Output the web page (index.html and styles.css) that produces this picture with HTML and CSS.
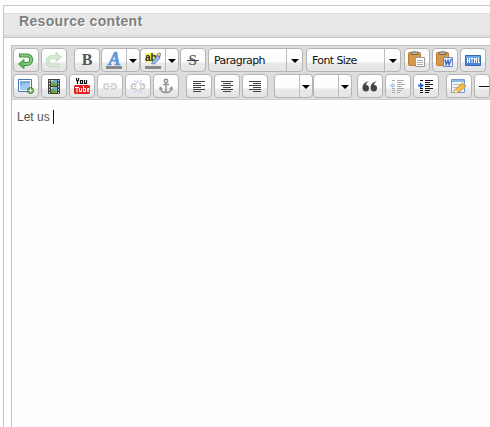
FILE: index.html
```html
<!DOCTYPE html>
<html lang="en">
<head>
<meta charset="utf-8">
<title>Resource content</title>
<link rel="stylesheet" href="styles.css">
</head>
<body>
<section class="panel">
  <h2 class="title">Resource content</h2>
  <div class="editor">
    <div class="toolbar">
      <div class="row">
        <button class="btn"><svg viewBox="0 0 24 22"><path d="M5 6.500h8a4 4 0 0 1 0 8.500h-3" fill="none" stroke="#3f9440" stroke-width="4"/><path d="M4.500 15l5.500-4.500v9z" fill="#66b963" stroke="#3f9440"/><path d="M6 6.500h7a4 4 0 0 1 0 8.500h-4" fill="none" stroke="#83c980" stroke-width="2"/></svg></button>
        <button class="btn"><svg viewBox="0 0 24 22"><path d="M18 16.500h-8a4 4 0 0 1 0-8.500h4" fill="none" stroke="#c3dec3" stroke-width="4"/><path d="M19.500 8l-5.500-4.500v9z" fill="#d1e6d1" stroke="#c3dec3"/><path d="M17 16.500h-7a4 4 0 0 1 0-8.500h5" fill="none" stroke="#d8ead8" stroke-width="2"/></svg></button>
        <button class="btn gap7"><span class="bold">B</span></button>
        <button class="btn split"><svg viewBox="0 0 24 22"><text x="6.500" y="15.500" class="letter-a">A</text><path d="M4 17h16v3H4z" fill="#888"/></svg><i class="arrow"></i></button>
        <button class="btn split"><svg viewBox="0 0 24 22"><path d="M4 4h11v9H4z" fill="#fff45b"/><text x="4" y="12" class="letter-ab">ab</text><path d="M10.500 14.500l2-3 4-5 2.500 1-1 3-5 4.500z" fill="#9bbcf0" stroke="#5a75a8" stroke-width=".8"/><path d="M15.500 6.500l2-2.500 2 .5-.5 3z" fill="#f0dca8" stroke="#555" stroke-width=".7"/><path d="M4 17h16v3H4z" fill="#888"/></svg><i class="arrow"></i></button>
        <button class="btn gap1"><svg viewBox="0 0 24 22"><text x="7.500" y="16" class="strike">S</text><path d="M6 11.500h12" stroke="#444"/></svg></button>
        <div class="select"><span class="value">Paragraph</span><i class="arrow"></i></div>
        <div class="select gap3"><span class="value">Font Size</span><i class="arrow"></i></div>
        <button class="btn gap3"><svg viewBox="0 0 24 22"><rect x="3.500" y="3.500" width="12" height="13" rx="1" fill="#d29a4b" stroke="#b97b32"/><path d="M6 4.500V3h1.500q2-1.500 4 0H13v2.500H6z" fill="#aaa" stroke="#76552d" stroke-width=".7"/><path d="M10.500 8.500h9v9h-9z" fill="#fff" stroke="#999"/><path d="M12 11.500h6m-6 2h6m-6 2h6" stroke="#aaa"/></svg></button>
        <button class="btn"><svg viewBox="0 0 24 22"><rect x="3.500" y="3.500" width="12" height="13" rx="1" fill="#d29a4b" stroke="#b97b32"/><path d="M6 4.500V3h1.500q2-1.500 4 0H13v2.500H6z" fill="#aaa" stroke="#76552d" stroke-width=".7"/><path d="M10.500 8.500h9v9h-9z" fill="#e8effd" stroke="#6d87cb"/><path d="M12 10.500l1.200 5 1.800-4 1 4 2.500-5.500" fill="none" stroke="#476cc4" stroke-width="1.500"/></svg></button>
        <button class="btn"><svg viewBox="0 0 24 22"><path d="M4.500 6.500h15v10h-15z" fill="#4b87d5" stroke="#3569b2"/><path d="M5 7h14v3H5z" fill="#6ba5e5"/><path d="M6.500 9v5m2-5v5m-2-2.500h2M9.500 9.500h3M11 9.500V14M13.500 14V9l1 2 1-2v5M17.500 9v4.500h1.500" fill="none" stroke="#fff"/></svg></button>
      </div>
      <div class="row">
        <button class="btn"><svg viewBox="0 0 24 22"><path d="M4.500 4.500h13v12h-13z" fill="#fff" stroke="#4674ab"/><path d="M6 6h10v9H6z" fill="#79aee4"/><path d="M6 11q5-4 10-2v6H6z" fill="#a2c9ef"/><circle cx="16.500" cy="15.500" r="3" fill="#6bac4a" stroke="#48852e"/><path d="M14.500 15.500h4m-2-2v4" stroke="#fff"/></svg></button>
        <button class="btn"><svg viewBox="0 0 24 22"><path d="M6 4h12v15H6z" fill="#414141"/><path d="M7.500 5v14M16.500 5v14" stroke="#ddd" stroke-dasharray="1.500 1.500"/><path d="M9 5h6v6H9zm0 7h6v6H9z" fill="#64b4d8"/><path d="M9 8l3-1 3 3v1H9zm0 7l3-1 3 3v1H9z" fill="#6da832"/><path d="M9 5h3l-3 2zm0 7h3l-3 2z" fill="#f3dc6e"/></svg></button>
        <button class="btn"><svg viewBox="0 0 24 22"><path d="M6.500 3v2l1 1.500L8.500 5V3M7.500 6v3M10.500 5.500h2v3h-2zM14.500 5v3.500h2V5" fill="none" stroke="#111" stroke-width="1.200"/><rect x="4" y="10" width="16" height="9" rx="1.500" fill="#e32121"/><path d="M5 12.500h4M7 12v5.500M9.500 13v3.500h2V13M13.500 11v5.500h2v-3h-2M19 16.500h-1.500v-3H19v1.500h-1.500" fill="none" stroke="#fff"/></svg></button>
        <button class="btn"><svg viewBox="0 0 24 22"><g fill="none" stroke="#cbcbcb" stroke-width="1.500"><path d="M11 9H8.500a2.500 2.500 0 0 0 0 5H11M13 9h2.500a2.500 2.500 0 0 1 0 5H13M9 11.500h6"/></g></svg></button>
        <button class="btn"><svg viewBox="0 0 24 22"><path d="M10.500 9H8a2.500 2.500 0 0 0 0 5h2.500M13.500 9H16a2.500 2.500 0 0 1 0 5h-2.500M8 11.500h2m4 0h2" fill="none" stroke="#c5c5c5" stroke-width="1.500"/><path d="M8 5l3 3m5-3l-3 3M8 18l3-3m5 3l-3-3M12 5v3m0 7v3" stroke="#b7cdf2"/></svg></button>
        <button class="btn"><svg viewBox="0 0 24 22"><g fill="none" stroke="#929292" stroke-width="1.500"><circle cx="12" cy="6" r="1.700"/><path d="M12 8v9M9 9.500h6M6.500 12.500q0 5 5.500 5t5.500-5"/></g><path d="M5 15l1-4 3 3zm14 0l-1-4-3 3z" fill="#929292"/></svg></button>
        <button class="btn gap7"><svg viewBox="0 0 24 22"><path d="M6 6.500h12M6 8.500h8M6 10.500h12M6 12.500h8M6 14.500h12M6 16.500h8" stroke="#444"/></svg></button>
        <button class="btn"><svg viewBox="0 0 24 22"><path d="M6 6.500h12M8 8.500h8M6 10.500h12M8 12.500h8M6 14.500h12M8 16.500h8" stroke="#444"/></svg></button>
        <button class="btn"><svg viewBox="0 0 24 22"><path d="M6 6.500h12M10 8.500h8M6 10.500h12M10 12.500h8M6 14.500h12M10 16.500h8" stroke="#444"/></svg></button>
        <button class="btn split gap6"><span class="blank"></span><i class="arrow"></i></button>
        <button class="btn split"><span class="blank"></span><i class="arrow"></i></button>
        <button class="btn gap7"><svg viewBox="0 0 24 22"><path d="M11 6q-3 1.500-3 4 3 0 3 3 0 3.500-3 3.500-3.500 0-3.500-4 0-5 6.500-6.500zM19 6q-3 1.500-3 4 3 0 3 3 0 3.500-3 3.500-3.500 0-3.500-4Q12.500 7.500 19 6z" fill="#444"/></svg></button>
        <button class="btn"><svg viewBox="0 0 24 22"><path d="M6 5.500h3m2 0h7M11 7.500h5M11 9.500h8M11 11.500h5M6 13.500h3m2 0h7M6 15.500h3m2 0h5M6 17.500h3m2 0h3" stroke="#aaa"/><path d="M9 10.500H6" stroke="#b5cbed" stroke-width="2"/><path d="M3.500 10.500l4-3v6z" fill="#b5cbed"/></svg></button>
        <button class="btn"><svg viewBox="0 0 24 22"><path d="M6 5.500h3m2 0h8M11 7.500h5M11 9.500h8M11 11.500h5M6 13.500h3m2 0h8M6 15.500h3m2 0h5M6 17.500h3m2 0h4" stroke="#111"/><path d="M4 10.500h4" stroke="#3973d0" stroke-width="2"/><path d="M10 10.500l-4-3v6z" fill="#2865c7"/></svg></button>
        <button class="btn gap7"><svg viewBox="0 0 24 22"><path d="M4.500 4.500h13v13h-13z" fill="#eff6ff" stroke="#6e9cd3"/><path d="M5 5h12v2H5z" fill="#8db7e4"/><path d="M6 9.500h10M6 12.500h6M6 15.500h3" stroke="#a5c8a0"/><path d="M7.500 18l1-4 7-6 3.500 3-7 6z" fill="#f5bc4e" stroke="#b77c26" stroke-width=".8"/><path d="M7.500 18l1-3.500 2.500 2.500z" fill="#fff0ca"/></svg></button>
        <button class="btn"><svg viewBox="0 0 24 22"><path d="M4 11.500h16" stroke="#111"/></svg></button>
      </div>
    </div>
    <div class="content"><span>Let us</span><i class="caret"></i></div>
  </div>
</section>
</body>
</html>
```
FILE: styles.css
```css
* { box-sizing: border-box; }
body { margin: 0; height: 427px; overflow: hidden; background: #fdfdfd; font-family: "Liberation Sans", Arial, sans-serif; }
.panel { height: 422px; margin: 5px 0 0 3px; border: 1px solid #c6c6c6; border-width: 1px 0 0 1px; padding-top: 7px; overflow: hidden; background: #fefefe; }
.title { height: 25px; margin: 0; padding: 0 0 0 15px; border-top: 1px dotted #ddd; border-bottom: 1px solid #c6c6c6; background: linear-gradient(#e8e8e8 20px, #dcdcdc 21px); color: #808080; font-size: 14px; line-height: 15px; letter-spacing: .32px; text-shadow: 1px 1px #fff; }
.editor { margin: 7px 0 0 7px; height: 400px; border: 1px solid #c0c0c0; border-right: 0; }
.toolbar { height: 54px; padding: 2px 0 2px 1px; overflow: hidden; background: #ddd; border-bottom: 1px solid #d0d0d0; }
.row { display: flex; height: 24px; margin-bottom: 2px; overflow: hidden; }
.btn, .select { flex: none; display: flex; height: 24px; padding: 0; border: 1px solid #b4b4b4; border-radius: 4px; background: linear-gradient(#fff 0, #fcfcfc 13px, #e9e9e9 14px, #e5e5e5); }
.btn { width: 26px; margin-right: 2px; align-items: center; justify-content: center; }
.btn:last-child { flex: 0 1 26px; min-width: 0; margin-right: 0; justify-content: flex-start; overflow: hidden; }
.btn svg { display: block; flex: none; width: 24px; height: 22px; }
.gap1 { margin-left: 1px; }
.gap3 { margin-left: 3px; }
.gap6 { margin-left: 4px; }
.gap7 { margin-left: 5px; }
.split { width: 39px; margin-right: 0; justify-content: flex-start; }
.gap7 + .split { margin-left: -1px; }
.bold { color: #555; font: bold 16px "Liberation Serif", serif; }
.strike { fill: #666; font: bold 15px "Liberation Serif", serif; }
.letter-a { fill: #5c95dc; stroke: #5c95dc; stroke-width: .6px; font: italic bold 18px "Liberation Serif", serif; }
.letter-ab { fill: #222; font: bold 10px "Liberation Sans", sans-serif; }
.blank { width: 24px; }
.arrow { flex: 1; align-self: stretch; display: flex; align-items: center; justify-content: center; border-left: 1px solid #bbb; }
.arrow::after { content: ""; border: 4px solid transparent; border-top-color: #000; border-bottom: 0; margin-top: 2px; }
.select { width: 95px; }
.value { width: 77px; padding-left: 5px; color: #111; font: 11px/24px "DejaVu Sans", sans-serif; letter-spacing: -.6px; white-space: nowrap; }
.content { display: flex; padding: 10px 5px; color: #555; font-size: 12px; line-height: 15px; }
.caret { width: 1px; height: 14px; margin-left: 3px; background: #111; }
```
